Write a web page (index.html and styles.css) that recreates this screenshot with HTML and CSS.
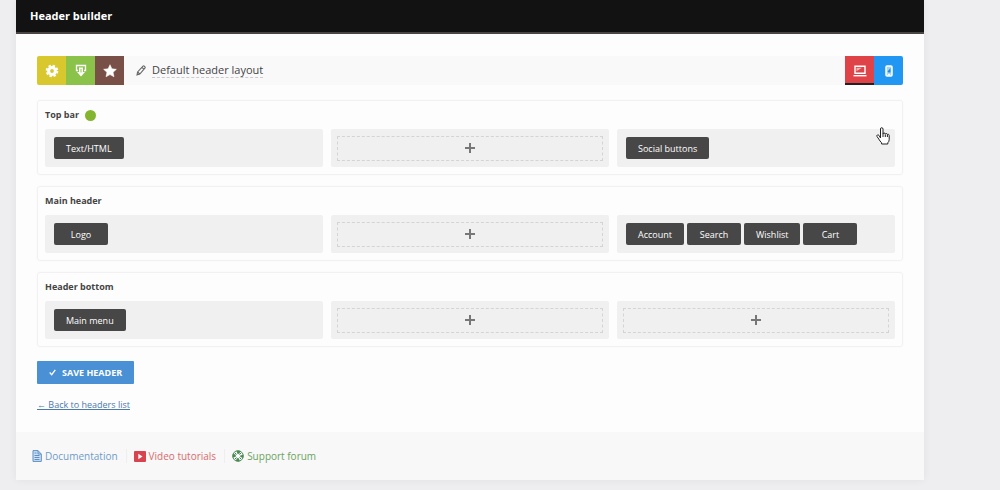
FILE: index.html
```html
<!DOCTYPE html>
<html lang="en">
<head>
    <meta charset="UTF-8">
    <meta name="viewport" content="width=device-width, initial-scale=1.0">
    <title>Header builder</title>
    <link rel="stylesheet" href="styles.css">
</head>
<body>

    <main class="panel">
        <header class="panel-header">
            <h1>Header builder</h1>
        </header>

        <div class="panel-body">
            <div class="toolbar">
                <button class="tool tool-settings" aria-label="Settings">
                    <svg width="14" height="14" viewBox="0 0 14 14" fill="none" stroke="#fff"><circle cx="7" cy="7" r="3.400" stroke-width="3"/><circle cx="7" cy="7" r="5.400" stroke-width="1.800" stroke-dasharray="2.400 1.840"/></svg>
                </button>
                <button class="tool tool-import" aria-label="Import">
                    <svg width="12" height="14" viewBox="0 0 12 14"><path d="M3 6.500H1.500V1.500H10.500V6.500H9" fill="none" stroke="#fff" stroke-width="1.300"/><path d="M4 3.500h4v4.500h2L6 12.500 2 8h2z" fill="#fff"/><path d="M6 5v3.500" stroke="#8bc34a"/></svg>
                </button>
                <button class="tool tool-default" aria-label="Make default">
                    <svg width="14" height="14" viewBox="0 0 14 14"><path d="M7 .7l1.900 4.100 4.500.5-3.300 3 .9 4.500L7 10.600l-4 2.200.9-4.500-3.300-3 4.500-.5z" fill="#fff" stroke="#fff" stroke-width=".5" stroke-linejoin="round"/></svg>
                </button>
                <div class="layout-name">
                    <svg width="10" height="11" viewBox="0 0 10 11"><path d="M1 10l.6-3L7 1.200q.7-.6 1.300 0l.6.6q.6.6 0 1.300L3.800 9zM6 2.300l1.900 1.900M1.700 7l2 2" fill="none" stroke="#666" stroke-width="1.100"/></svg>
                    <span>Default header layout</span>
                </div>
                <button class="tool tool-desktop active" aria-label="Desktop">
                    <svg width="14" height="12" viewBox="0 0 14 12"><path d="M2 1.200h10v7H2z" fill="none" stroke="#fff" stroke-width="1.400"/><path d="M.5 10.700h13" stroke="#fff" stroke-width="1.400"/><path d="M3.500 2.700h5.500l-5.500 3.500z" fill="#fff" opacity=".6"/></svg>
                </button>
                <button class="tool tool-mobile" aria-label="Mobile">
                    <svg width="8" height="12" viewBox="0 0 8 12"><rect x="1" y="1" width="6" height="10" rx="1" fill="#a6d5fb" stroke="#fff" stroke-width="1.500"/><path d="M2.500 6.500L5.500 3v4.500h-2z" fill="#1e88e5"/><path d="M3 9.500h2" stroke="#fff"/></svg>
                </button>
            </div>

            <section class="row">
                <h2>Top bar <span class="status"></span></h2>
                <div class="columns">
                    <div class="column"><button class="element">Text/HTML</button></div>
                    <div class="column"><button class="add" aria-label="Add element"><svg width="10" height="10" viewBox="0 0 10 10"><path d="M5 0v10M0 5h10" stroke="#777" stroke-width="2"/></svg></button></div>
                    <div class="column"><button class="element">Social buttons</button></div>
                </div>
            </section>

            <section class="row">
                <h2>Main header</h2>
                <div class="columns">
                    <div class="column"><button class="element">Logo</button></div>
                    <div class="column"><button class="add" aria-label="Add element"><svg width="10" height="10" viewBox="0 0 10 10"><path d="M5 0v10M0 5h10" stroke="#777" stroke-width="2"/></svg></button></div>
                    <div class="column">
                        <button class="element">Account</button>
                        <button class="element">Search</button>
                        <button class="element">Wishlist</button>
                        <button class="element">Cart</button>
                    </div>
                </div>
            </section>

            <section class="row">
                <h2>Header bottom</h2>
                <div class="columns">
                    <div class="column"><button class="element">Main menu</button></div>
                    <div class="column"><button class="add" aria-label="Add element"><svg width="10" height="10" viewBox="0 0 10 10"><path d="M5 0v10M0 5h10" stroke="#777" stroke-width="2"/></svg></button></div>
                    <div class="column"><button class="add" aria-label="Add element"><svg width="10" height="10" viewBox="0 0 10 10"><path d="M5 0v10M0 5h10" stroke="#777" stroke-width="2"/></svg></button></div>
                </div>
            </section>

            <button class="save">
                <svg width="7" height="7" viewBox="0 0 7 7"><path d="M.7 3.500l2 2.200L6.300.8" fill="none" stroke="#fff" stroke-width="1.300"/></svg>
                SAVE HEADER
            </button>
            <a class="back" href="#">← Back to headers list</a>
        </div>

        <footer class="panel-footer">
            <a class="docs" href="#">
                <svg width="10" height="12" viewBox="0 0 10 12"><path d="M1 .6h5L9.300 4v7.400H1z" fill="#cfdfef" stroke="#5b8fc7"/><path d="M6 .6V4h3M2.500 3h2M2.500 5.500h5M2.500 7.500h5M2.500 9.500h5" fill="none" stroke="#5b8fc7"/></svg>
                Documentation
            </a>
            <a class="video" href="#">
                <svg width="12" height="11" viewBox="0 0 12 11"><rect width="12" height="11" rx="1" fill="#d9434e"/><path d="M4.300 2.800v5.400l4.200-2.700z" fill="#fff"/></svg>
                Video tutorials
            </a>
            <a class="forum" href="#">
                <svg width="12" height="12" viewBox="0 0 12 12" fill="none"><circle cx="6" cy="6" r="5.300" fill="#eef5ea" stroke="#4f8a55"/><circle cx="6" cy="6" r="3.800" stroke="#4b8a50" stroke-width="3" stroke-dasharray="2.980 2.980" stroke-dashoffset="1.490"/><path d="M3 3l1.500 1.500M9 3L7.500 4.500M3 9l1.500-1.500M9 9L7.500 7.500" stroke="#4a6f92"/><circle cx="6" cy="6" r="1.600" fill="#fff"/></svg>
                Support forum
            </a>
        </footer>

        <svg class="cursor" width="14" height="18" viewBox="0 0 14 18"><path d="M4.500 11V2q0-1.300 1.200-1.300T7 2v5q0-1 1.100-1t1.200 1.200q.2-.8 1.100-.7t1 1.200q.3-.6 1-.4t.8 1.200v4q0 2-1.400 3.300V17H5.600v-1.200Q3.800 14 2.800 12.100L1 9.500q-.5-1 .3-1.500t1.700.4z" fill="#fff" stroke="#222" stroke-linejoin="round"/><path d="M7 7v3M9.300 7.500V10M11.400 8v2" stroke="#222"/></svg>
    </main>

</body>
</html>
```
FILE: styles.css
```css
* { box-sizing: border-box; }
body { margin: 0; background: #eeeef0; color: #444; font-family: 'Open Sans', 'Noto Sans', sans-serif; font-size: 9px; line-height: 14px; }
h1, h2 { margin: 0; }
button { font-family: inherit; border: none; padding: 0; cursor: pointer; }
svg { display: block; flex: none; }

.panel { position: relative; margin: 0 76px 10px 16px; background: #fefdfe; box-shadow: 0 0 8px rgba(0, 0, 0, 0.06); }
.panel-header { padding: 8px 14px; background: #121212; border-bottom: 2px solid #494545; }
.panel-header h1 { color: #fff; font-size: 11px; line-height: 16px; font-weight: 700; }
.panel-body { padding: 22px 21px 20px; }

.toolbar { display: flex; height: 29px; margin-bottom: 15px; background: #f9f9fa; border-radius: 2px; }
.tool { display: flex; align-items: center; justify-content: center; width: 29px; }
.tool-settings { background: #d8c82e; border-radius: 2px 0 0 2px; }
.tool-import { background: #8bc34a; }
.tool-default { background: #795047; }
.tool-desktop { background: #df4347; }
.tool-mobile { background: #2196f3; border-radius: 0 2px 2px 0; }
.tool.active { box-shadow: inset 0 -2px #222; }
.layout-name { display: flex; flex: 1; align-items: center; gap: 6px; padding-left: 12px; font-size: 11px; }
.layout-name span { border-bottom: 1px dashed #ccc; }

.row { margin-bottom: 11px; padding: 7px; border: 1px solid #f1f1f3; border-radius: 3px; box-shadow: 0 0 2px rgba(0, 0, 0, 0.04); }
.row h2 { display: flex; align-items: center; gap: 6px; margin-bottom: 7px; font-size: 9px; line-height: 14px; font-weight: 700; }
.status { width: 11px; height: 11px; border-radius: 50%; background: #84b52f; }
.columns { display: flex; gap: 8px; }
.column { display: flex; flex: 1; align-items: center; gap: 3px; height: 38px; padding: 6px; background: #f0f0f0; border-radius: 2px; }
.element { min-width: 54px; height: 22px; padding: 0 12px; background: #484748; border-radius: 2px; color: #fff; font-size: 9px; }
.element:first-child { margin-left: 3px; }
.add { display: flex; flex: 1; align-items: center; justify-content: center; height: 25px; background: none; border: 1px dashed #d4d4d4; }

.save { display: flex; align-items: center; gap: 6px; height: 23px; margin: 14px 0; padding: 0 12px; background: #4990d5; border-radius: 1px; color: #fff; font-size: 9px; font-weight: 700; }
.back { color: #4b7baa; }

.panel-footer { display: flex; align-items: center; height: 48px; padding: 0 16px; background: #f8f8f8; }
.panel-footer a { display: flex; align-items: center; gap: 3px; font-size: 10px; text-decoration: none; }
.panel-footer a + a { margin-left: 8px; padding-left: 7px; border-left: 1px solid #eee; }
.docs { color: #6f9cc9; }
.video { color: #dc6a6c; }
.forum { color: #6aa35f; }

/* pointer over the last column */
.cursor { position: absolute; top: 127px; right: 34px; }
```
